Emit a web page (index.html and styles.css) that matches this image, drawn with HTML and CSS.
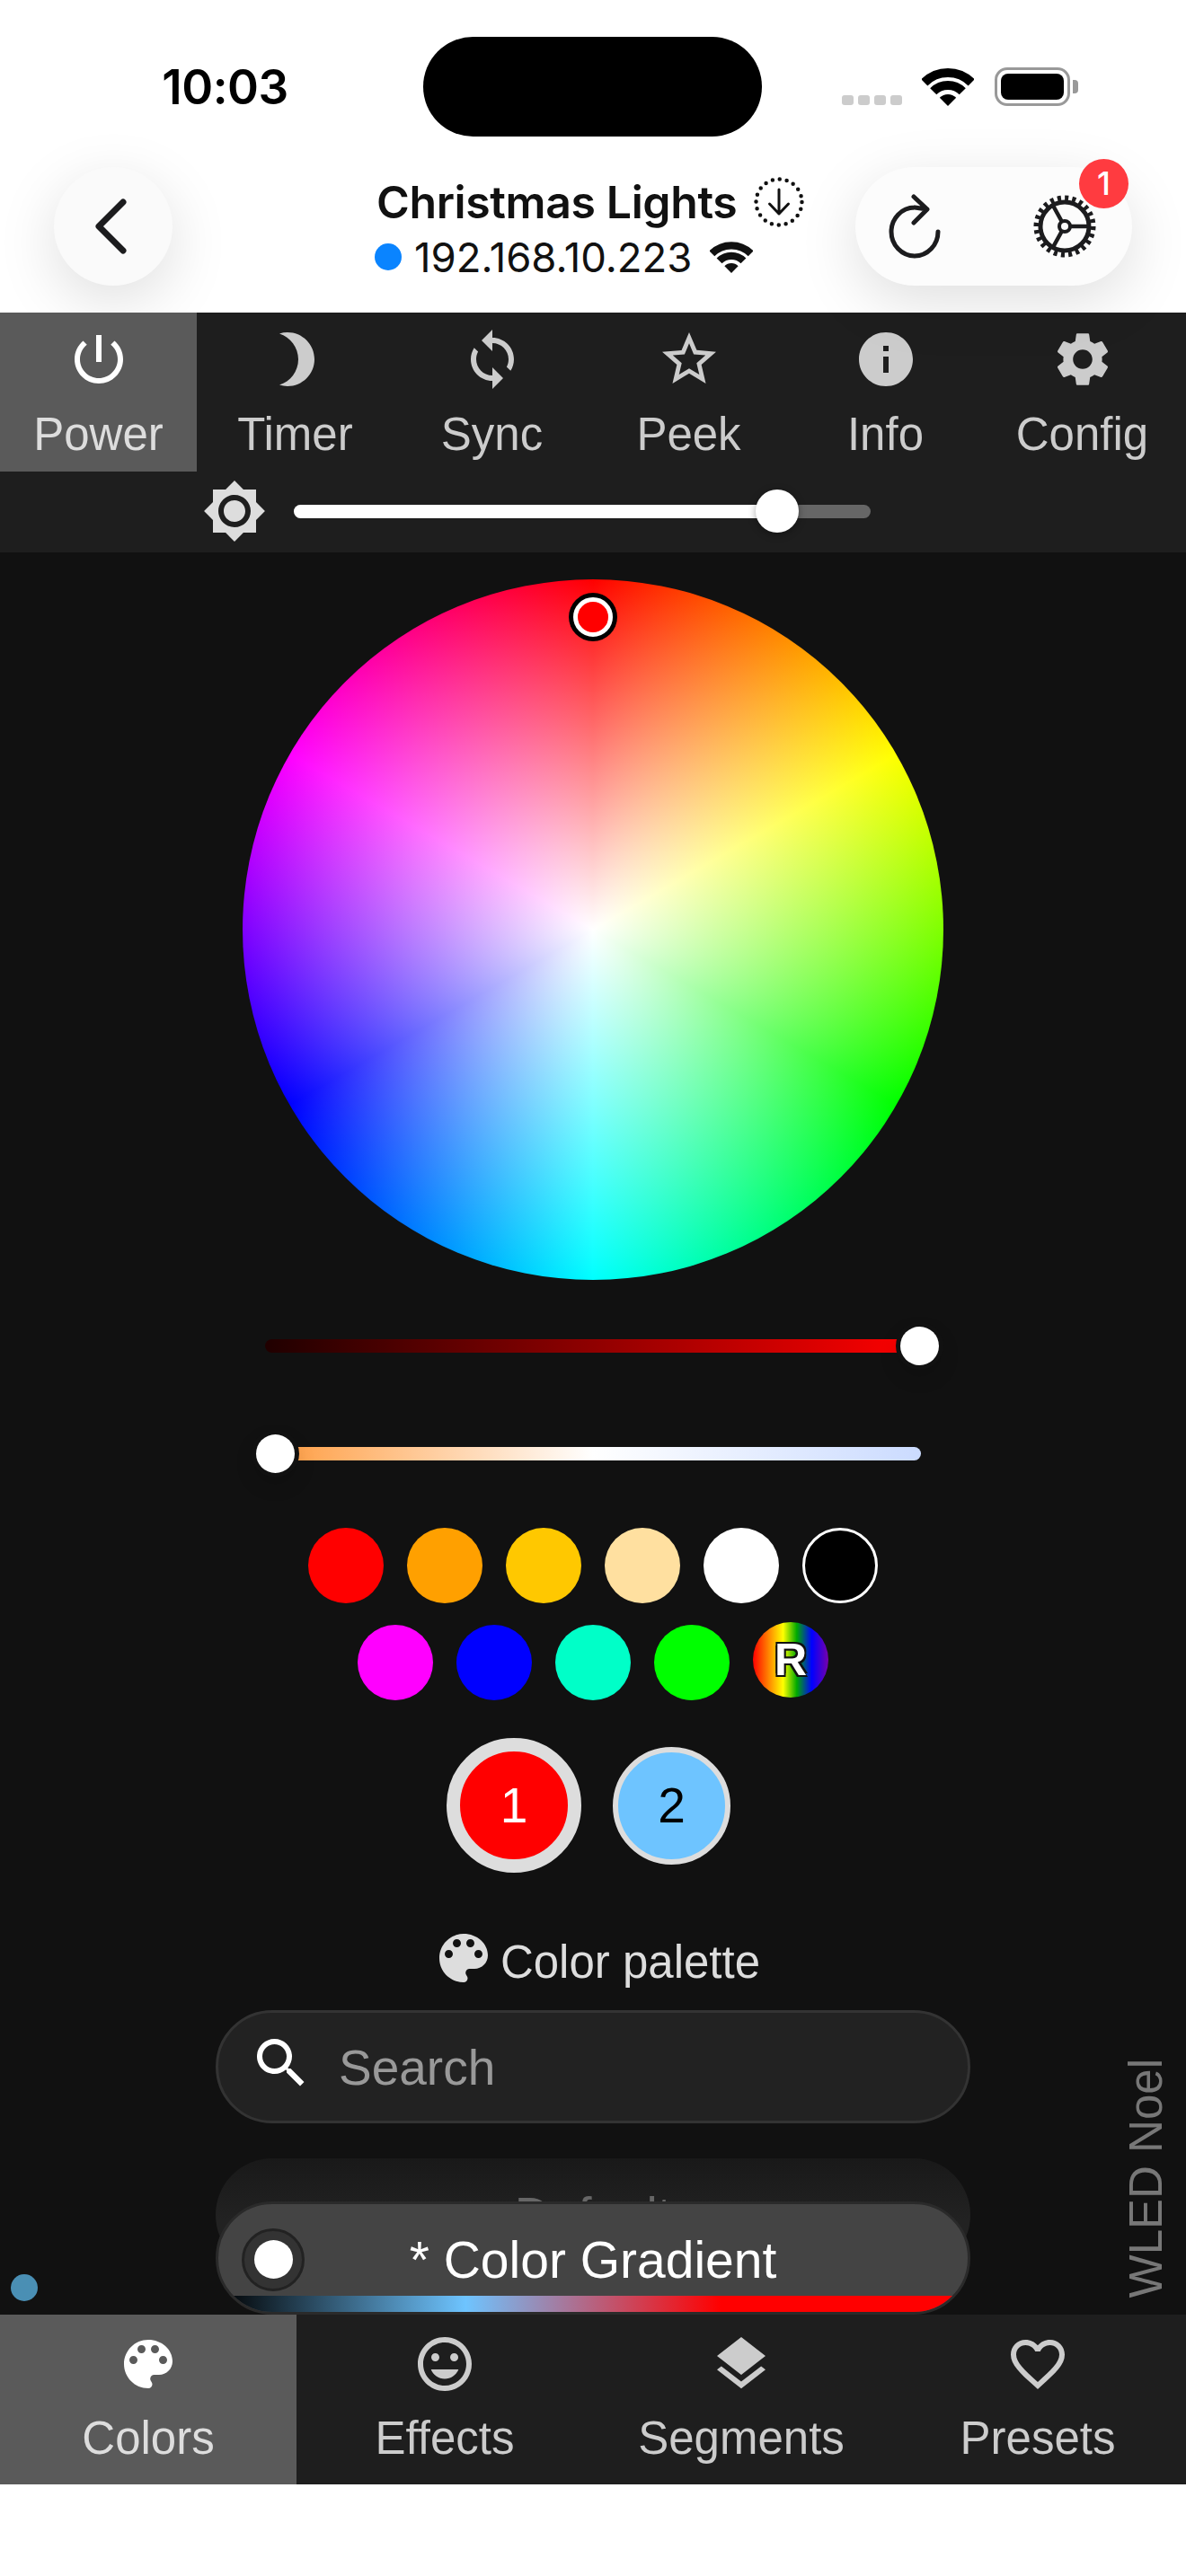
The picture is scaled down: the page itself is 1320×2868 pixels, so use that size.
FILE: index.html
```html
<!DOCTYPE html>
<html lang="en">
<head>
    <meta charset="UTF-8">
    <meta name="viewport" content="width=device-width, initial-scale=1.0">
    <title>Christmas Lights</title>
    <link rel="stylesheet" href="styles.css">
</head>
<body>
<svg class="icon-defs" xmlns="http://www.w3.org/2000/svg">
    <symbol id="i-wifi" viewBox="0 0 58 42">
        <path d="M2.84 15.84A37 37 0 0 1 55.16 15.84M12.74 25.74A23 23 0 0 1 45.26 25.74" fill="none" stroke="currentColor" stroke-width="10"/>
        <path d="M29 42L19.81 32.81A13 13 0 0 1 38.19 32.81Z" fill="currentColor"/>
    </symbol>
    <symbol id="i-palette" viewBox="0 0 24 24">
        <path d="M12 3c-4.97 0-9 4.03-9 9s4.03 9 9 9c.83 0 1.5-.67 1.5-1.5 0-.39-.15-.74-.39-1.01-.23-.26-.38-.61-.38-.99 0-.83.67-1.5 1.5-1.5H16c2.76 0 5-2.24 5-5 0-4.42-4.03-8-9-8zm-5.5 9c-.83 0-1.5-.67-1.5-1.5S5.67 9 6.5 9 8 9.67 8 10.5 7.33 12 6.5 12zm3-4C8.67 8 8 7.33 8 6.5S8.67 5 9.5 5s1.5.67 1.5 1.5S10.33 8 9.5 8zm5 0c-.83 0-1.5-.67-1.5-1.5S13.67 5 14.5 5s1.5.67 1.5 1.5S15.33 8 14.5 8zm3 4c-.83 0-1.5-.67-1.5-1.5S16.67 9 17.5 9s1.5.67 1.5 1.5-.67 1.5-1.5 1.5z" fill="currentColor"/>
    </symbol>
</svg>

<div class="app">
    <!-- iOS status bar -->
    <div class="status-bar">
        <div class="clock">10:03</div>
        <div class="island"></div>
        <div class="status-icons">
            <div class="signal"><span></span><span></span><span></span><span></span></div>
            <svg class="status-wifi"><use href="#i-wifi"/></svg>
            <div class="battery"><div class="battery-level"></div></div>
            <div class="battery-cap"></div>
        </div>
    </div>

    <!-- app header -->
    <header class="app-header">
        <button class="round-btn back-btn" aria-label="Back">
            <svg viewBox="0 0 40 64" class="back-icon"><path d="M34 5L7 32L34 59"/></svg>
        </button>
        <div class="device">
            <div class="device-name">
                <span>Christmas Lights</span>
                <svg class="update-icon" viewBox="0 0 56 56">
                    <circle class="update-dots" cx="28" cy="28" r="25.5"/>
                    <path class="update-arrow" d="M28 14V41M17.5 30L28 41L38.5 30"/>
                </svg>
            </div>
            <div class="device-addr">
                <span class="online-dot"></span>
                <span class="addr-text">192.168.10.223</span>
                <svg class="addr-wifi"><use href="#i-wifi"/></svg>
            </div>
        </div>
        <div class="action-pill">
            <svg class="reload-icon" viewBox="0 0 60 72"><path d="M55 42A26 27 0 1 1 29 15L43 17M28 3L43 17L28 32"/></svg>
            <svg class="cog-icon" viewBox="0 0 72 72">
                <circle class="cog-teeth" cx="36" cy="36" r="31"/>
                <circle class="cog-ring" cx="36" cy="36" r="27"/>
                <circle class="cog-hub" cx="36" cy="36" r="6"/>
                <path class="cog-spokes" d="M42 36H63M33 31L22 11M33 41L22 61"/>
            </svg>
            <span class="badge">1</span>
        </div>
    </header>

    <!-- top nav + brightness -->
    <section class="top-bar">
        <nav class="top-tabs">
            <a class="tab active">
                <svg class="tab-icon" viewBox="0 0 24 24"><path d="M13 3h-2v10h2V3zm4.83 2.17l-1.42 1.42C17.99 7.86 19 9.81 19 12c0 3.87-3.13 7-7 7s-7-3.13-7-7c0-2.19 1.01-4.14 2.58-5.42L6.17 5.17C4.23 6.82 3 9.26 3 12c0 4.97 4.03 9 9 9s9-4.03 9-9c0-2.74-1.23-5.18-3.17-6.83z"/></svg>
                <span>Power</span>
            </a>
            <a class="tab">
                <svg class="tab-icon" viewBox="0 0 24 24"><path d="M9 2c-1.05 0-2.05.16-3 .46 4.06 1.27 7 5.06 7 9.54 0 4.48-2.94 8.27-7 9.54.95.3 1.95.46 3 .46 5.52 0 10-4.48 10-10S14.52 2 9 2z"/></svg>
                <span>Timer</span>
            </a>
            <a class="tab">
                <svg class="tab-icon" viewBox="0 0 24 24"><path d="M12 4V1L8 5l4 4V6c3.31 0 6 2.69 6 6 0 1.01-.25 1.97-.7 2.8l1.46 1.46C19.54 15.03 20 13.57 20 12c0-4.42-3.58-8-8-8zm0 14c-3.31 0-6-2.69-6-6 0-1.01.25-1.97.7-2.8L5.24 7.74C4.46 8.97 4 10.43 4 12c0 4.42 3.58 8 8 8v3l4-4-4-4v3z"/></svg>
                <span>Sync</span>
            </a>
            <a class="tab">
                <svg class="tab-icon" viewBox="0 0 24 24"><path d="M22 9.24l-7.19-.62L12 2 9.19 8.63 2 9.24l5.46 4.73L5.82 21 12 17.27 18.18 21l-1.63-7.03L22 9.24zM12 15.4l-3.76 2.27 1-4.28-3.32-2.88 4.38-.38L12 6.1l1.71 4.04 4.38.38-3.32 2.88 1 4.28L12 15.4z"/></svg>
                <span>Peek</span>
            </a>
            <a class="tab">
                <svg class="tab-icon" viewBox="0 0 24 24"><path d="M12 2C6.48 2 2 6.48 2 12s4.48 10 10 10 10-4.48 10-10S17.52 2 12 2zm1 15h-2v-6h2v6zm0-8h-2V7h2v2z"/></svg>
                <span>Info</span>
            </a>
            <a class="tab">
                <svg class="tab-icon" viewBox="0 0 24 24"><path d="M19.14 12.94c.04-.3.06-.61.06-.94 0-.32-.02-.64-.07-.94l2.03-1.58c.18-.14.23-.41.12-.61l-1.92-3.32c-.12-.22-.37-.29-.59-.22l-2.39.96c-.5-.38-1.03-.7-1.62-.94l-.36-2.54c-.04-.24-.24-.41-.48-.41h-3.84c-.24 0-.43.17-.47.41l-.36 2.54c-.59.24-1.13.57-1.62.94l-2.39-.96c-.22-.08-.47 0-.59.22L2.74 8.87c-.12.21-.08.47.12.61l2.03 1.58c-.05.3-.09.63-.09.94s.02.64.07.94l-2.03 1.58c-.18.14-.23.41-.12.61l1.92 3.32c.12.22.37.29.59.22l2.39-.96c.5.38 1.03.7 1.62.94l.36 2.54c.05.24.24.41.48.41h3.84c.24 0 .44-.17.47-.41l.36-2.54c.59-.24 1.13-.56 1.62-.94l2.39.96c.22.08.47 0 .59-.22l1.92-3.32c.12-.22.07-.47-.12-.61l-2.01-1.58zM12 15.6c-1.98 0-3.6-1.62-3.6-3.6s1.62-3.6 3.6-3.6 3.6 1.62 3.6 3.6-1.62 3.6-3.6 3.6z"/></svg>
                <span>Config</span>
            </a>
        </nav>
        <div class="brightness">
            <svg class="bri-icon" viewBox="0 0 24 24"><path d="M20 8.69V4h-4.69L12 .69 8.69 4H4v4.69L.69 12 4 15.31V20h4.69L12 23.31 15.31 20H20v-4.69L23.31 12 20 8.69zM12 18c-3.31 0-6-2.69-6-6s2.69-6 6-6 6 2.69 6 6-2.69 6-6 6zm0-10c-2.21 0-4 1.79-4 4s1.79 4 4 4 4-1.79 4-4-1.79-4-4-4z"/></svg>
            <div class="bri-track">
                <div class="bri-fill"></div>
                <div class="bri-thumb"></div>
            </div>
        </div>
    </section>

    <!-- colors page -->
    <main class="colors-page">
        <div class="wheel">
            <div class="wheel-handle"></div>
        </div>

        <div class="slider slider-value"><div class="thumb thumb-end"></div></div>
        <div class="slider slider-kelvin"><div class="thumb thumb-start"></div></div>

        <div class="swatches">
            <span class="swatch sw-red"></span>
            <span class="swatch sw-orange"></span>
            <span class="swatch sw-amber"></span>
            <span class="swatch sw-cream"></span>
            <span class="swatch sw-white"></span>
            <span class="swatch sw-black"></span>
        </div>
        <div class="swatches swatches-second">
            <span class="swatch sw-magenta"></span>
            <span class="swatch sw-blue"></span>
            <span class="swatch sw-teal"></span>
            <span class="swatch sw-green"></span>
            <span class="swatch sw-random">R</span>
        </div>

        <div class="slots">
            <button class="slot slot-selected">1</button>
            <button class="slot slot-second">2</button>
        </div>

        <h3 class="palette-title">
            <svg class="palette-icon"><use href="#i-palette"/></svg>
            <span>Color palette</span>
        </h3>

        <div class="search-box">
            <svg class="search-icon" viewBox="0 0 24 24"><path d="M15.5 14h-.79l-.28-.27C15.41 12.59 16 11.11 16 9.5 16 5.91 13.09 3 9.5 3S3 5.91 3 9.5 5.91 16 9.5 16c1.61 0 3.09-.59 4.23-1.57l.27.28v.79l5 4.99L20.49 19l-4.99-5zm-6 0C7.01 14 5 11.99 5 9.5S7.01 5 9.5 5 14 7.01 14 9.5 11.99 14 9.5 14z"/></svg>
            <span class="search-text">Search</span>
        </div>

        <div class="palette-list">
            <div class="palette-row">Default</div>
            <div class="palette-selected">
                <span class="radio"><span class="radio-dot"></span></span>
                <span class="selected-name">* Color Gradient</span>
                <div class="palette-strip"></div>
            </div>
        </div>

        <div class="conn-dot"></div>
        <div class="device-label">WLED Noel</div>
    </main>

    <!-- bottom nav -->
    <nav class="bottom-tabs">
        <a class="tab active">
            <svg class="tab-icon"><use href="#i-palette"/></svg>
            <span>Colors</span>
        </a>
        <a class="tab">
            <svg class="tab-icon" viewBox="0 0 24 24"><path d="M11.99 2C6.47 2 2 6.48 2 12s4.47 10 9.99 10C17.52 22 22 17.52 22 12S17.52 2 11.99 2zM12 20c-4.42 0-8-3.58-8-8s3.58-8 8-8 8 3.58 8 8-3.58 8-8 8zm3.5-9c.83 0 1.5-.67 1.5-1.5S16.33 8 15.5 8 14 8.67 14 9.5s.67 1.5 1.5 1.5zm-7 0c.83 0 1.5-.67 1.5-1.5S9.33 8 8.5 8 7 8.67 7 9.5 7.67 11 8.5 11zm3.5 6.5c2.33 0 4.31-1.46 5.11-3.5H6.89c.8 2.04 2.78 3.5 5.11 3.5z"/></svg>
            <span>Effects</span>
        </a>
        <a class="tab">
            <svg class="tab-icon" viewBox="0 0 24 24"><path d="M11.99 18.54l-7.37-5.73L3 14.07l9 7 9-7-1.63-1.27-7.38 5.74zM12 16l7.36-5.73L21 9l-9-7-9 7 1.63 1.27L12 16z"/></svg>
            <span>Segments</span>
        </a>
        <a class="tab">
            <svg class="tab-icon" viewBox="0 0 24 24"><path d="M16.5 3c-1.74 0-3.41.81-4.5 2.09C10.91 3.81 9.24 3 7.5 3 4.42 3 2 5.42 2 8.5c0 3.78 3.4 6.86 8.55 11.54L12 21.35l1.45-1.32C18.6 15.36 22 12.28 22 8.5 22 5.42 19.58 3 16.5 3zm-4.4 15.55l-.1.1-.1-.1C7.14 14.24 4 11.39 4 8.5 4 6.5 5.5 5 7.5 5c1.54 0 3.04.99 3.57 2.36h1.87C13.46 5.99 14.96 5 16.5 5c2 0 3.5 1.5 3.5 3.5 0 2.89-3.14 5.74-7.9 10.05z"/></svg>
            <span>Presets</span>
        </a>
    </nav>
</div>
</body>
</html>
```

FILE: styles.css
```css
* {
    box-sizing: border-box;
}

body {
    margin: 0;
    background: #fff;
    font-family: "Liberation Sans", Arial, sans-serif;
}

.icon-defs {
    display: none;
}

.app {
    width: 1320px;
    height: 2868px;
    display: flex;
    flex-direction: column;
    overflow: hidden;
}

/* Status bar */
.status-bar {
    height: 186px;
    display: flex;
    align-items: flex-start;
    font-family: Inter, "Liberation Sans", sans-serif;
}

.clock {
    width: 471px;
    padding-left: 30px;
    height: 194px;
    line-height: 194px;
    text-align: center;
    font-size: 53px;
    font-weight: 600;
    letter-spacing: -0.5px;
    color: #000;
}

.island {
    width: 377px;
    height: 111px;
    margin-top: 41px;
    background: #000;
    border-radius: 56px;
}

.status-icons {
    height: 118px;
    padding-left: 89px;
    display: flex;
    align-items: flex-end;
}

.signal {
    display: flex;
    gap: 5px;
    margin-bottom: 1px;
}

.signal span {
    width: 13px;
    height: 11px;
    border-radius: 3px;
    background: #ccc;
}

.status-wifi {
    width: 58px;
    height: 42px;
    margin-left: 22px;
    color: #000;
}

.battery {
    width: 84px;
    height: 43px;
    margin-left: 23px;
    padding: 4px;
    border: 3px solid #999;
    border-radius: 14px;
}

.battery-level {
    height: 100%;
    background: #000;
    border-radius: 8px;
}

.battery-cap {
    width: 6px;
    height: 15px;
    margin: 0 0 14px 3px;
    background: #999;
    border-radius: 0 4px 4px 0;
}

/* App header */
.app-header {
    height: 162px;
    padding-left: 60px;
    display: flex;
    align-items: flex-start;
    font-family: Inter, "Liberation Sans", sans-serif;
    color: #111;
}

.round-btn {
    width: 132px;
    height: 132px;
    padding: 0;
    border: 0;
    border-radius: 50%;
    background: #fafafa;
    box-shadow: 0 18px 66px rgba(0, 0, 0, 0.13);
    display: flex;
    align-items: center;
    justify-content: center;
}

.back-icon {
    width: 40px;
    height: 64px;
    margin-left: -6px;
    fill: none;
    stroke: #1c1c1e;
    stroke-width: 7;
    stroke-linecap: round;
    stroke-linejoin: round;
}

.device {
    width: 760px;
    padding: 9px 0 0 225px;
}

.device-name {
    height: 60px;
    display: flex;
    align-items: center;
    gap: 19px;
    margin-left: 2px;
    font-size: 50px;
    font-weight: 600;
    letter-spacing: -0.4px;
}

.update-icon {
    width: 56px;
    height: 56px;
    flex: none;
    fill: none;
    stroke: #111;
}

.update-dots {
    stroke-width: 4.5;
    stroke-linecap: round;
    stroke-dasharray: 0 8.01;
}

.update-arrow {
    stroke-width: 3;
    stroke-linecap: round;
    stroke-linejoin: round;
}

.device-addr {
    height: 60px;
    margin-top: 1px;
    display: flex;
    align-items: center;
    font-size: 45.5px;
}

.online-dot {
    width: 30px;
    height: 30px;
    border-radius: 50%;
    background: #0a84ff;
    margin-right: 14px;
}

.addr-wifi {
    width: 48px;
    height: 35px;
    margin-left: 20px;
    color: #111;
}

.action-pill {
    position: relative;
    width: 308px;
    height: 132px;
    padding-left: 37px;
    display: flex;
    align-items: center;
    gap: 100px;
    background: #fcfcfc;
    border-radius: 66px;
    box-shadow: 0 18px 66px rgba(0, 0, 0, 0.13);
}

.reload-icon {
    width: 60px;
    height: 72px;
    flex: none;
    fill: none;
    stroke: #1c1c1e;
    stroke-width: 5;
    stroke-linecap: round;
    stroke-linejoin: round;
}

.cog-icon {
    width: 72px;
    height: 72px;
    flex: none;
    fill: none;
    stroke: #1c1c1e;
}

.cog-teeth {
    stroke-width: 7;
    stroke-dasharray: 4 4.11;
}

.cog-ring {
    stroke-width: 5;
}

.cog-hub {
    stroke-width: 4;
}

.cog-spokes {
    stroke-width: 4.5;
}

/* sits over the corner of the pill */
.badge {
    position: absolute;
    left: 249px;
    top: -9px;
    width: 55px;
    height: 55px;
    border-radius: 50%;
    background: #ff3b40;
    color: #fff;
    font-size: 36px;
    font-weight: 500;
    line-height: 55px;
    text-align: center;
}

/* Tabs, shared by top and bottom nav */
.top-bar {
    height: 267px;
    background: #1e1e1e;
}

.top-tabs {
    display: grid;
    grid-template-columns: repeat(6, 219px);
    height: 177px;
}

.bottom-tabs {
    display: grid;
    grid-template-columns: repeat(4, 1fr);
    height: 189px;
    background: #1e1e1e;
}

.tab {
    display: flex;
    flex-direction: column;
    align-items: center;
    padding-top: 16px;
    color: #ccc;
    font-size: 51px;
    line-height: 60px;
}

.bottom-tabs .tab {
    padding-top: 19px;
}

.tab.active {
    background: #5a5a5a;
    color: #ddd;
}

.tab-icon {
    width: 72px;
    height: 72px;
    margin-bottom: 18px;
    fill: #ccc;
    color: #ccc;
    flex: none;
}

.bottom-tabs .tab-icon {
    margin-bottom: 17px;
}

.tab.active .tab-icon {
    fill: #fff;
    color: #fff;
}

/* Brightness */
.brightness {
    height: 90px;
    padding: 0 0 2px 225px;
    display: flex;
    align-items: center;
    gap: 30px;
}

.bri-icon {
    width: 72px;
    height: 72px;
    fill: #ddd;
}

.bri-track {
    position: relative;
    width: 642px;
    height: 15px;
    background: #666;
    border-radius: 8px;
}

.bri-fill {
    width: 538px;
    height: 15px;
    background: #fff;
    border-radius: 8px;
}

.bri-thumb {
    position: absolute;
    left: 514px;
    top: -17px;
    width: 48px;
    height: 48px;
    border-radius: 50%;
    background: #fff;
    box-shadow: 0 2px 8px rgba(0, 0, 0, 0.35);
}

/* Colors page */
.colors-page {
    position: relative;
    height: 1962px;
    flex: none;
    background: #111;
    display: flex;
    flex-direction: column;
    align-items: center;
    overflow: hidden;
}

.wheel {
    position: relative;
    width: 780px;
    height: 780px;
    margin-top: 30px;
    flex: none;
    border-radius: 50%;
    background:
        radial-gradient(circle closest-side, #fff, rgba(255, 255, 255, 0)),
        conic-gradient(#f00, #ff0, #0f0, #0ff, #00f, #f0f, #f00);
}

.wheel-handle {
    position: absolute;
    left: 368px;
    top: 20px;
    width: 44px;
    height: 44px;
    border-radius: 50%;
    background: #f00;
    border: 5.5px solid #fff;
    box-shadow: 0 0 0 5px #000;
}

.slider {
    position: relative;
    width: 730px;
    height: 15px;
    flex: none;
    border-radius: 8px;
}

.slider-value {
    margin-top: 66px;
    background: linear-gradient(90deg, #200000, #f00);
}

.slider-kelvin {
    margin-top: 105px;
    background: linear-gradient(90deg, #ff9a3c, #fff 50%, #cbdbff);
}

.thumb {
    position: absolute;
    top: -14px;
    width: 43px;
    height: 43px;
    border-radius: 50%;
    background: #fff;
    box-shadow: 0 0 0 5px #111, 0 10px 24px rgba(0, 0, 0, 0.2);
}

.thumb-end {
    left: 707px;
}

.thumb-start {
    left: -10px;
}

.swatches {
    display: flex;
    gap: 26px;
    margin-top: 75px;
    flex: none;
}

.swatches-second {
    margin-top: 24px;
}

.swatch {
    width: 84px;
    height: 84px;
    border-radius: 50%;
}

.sw-red { background: #f00; }
.sw-orange { background: #ffa000; }
.sw-amber { background: #ffc800; }
.sw-cream { background: #ffe0a0; }
.sw-white { background: #fff; }
.sw-black { background: #000; border: 3px solid #fff; }
.sw-magenta { background: #f0f; }
.sw-blue { background: #00f; }
.sw-teal { background: #00ffc8; }
.sw-green { background: #0f0; }

.sw-random {
    margin-top: -3px;
    background: linear-gradient(90deg, #f00, #ff0 40%, #0a0 58%, #00f 78%, #70a);
    color: #fff;
    font-size: 50px;
    font-weight: 700;
    line-height: 84px;
    text-align: center;
    text-shadow: -2px -2px 0 #111, 2px -2px 0 #111, -2px 2px 0 #111, 2px 2px 0 #111;
}

.slots {
    display: flex;
    align-items: center;
    gap: 35px;
    margin-top: 42px;
    flex: none;
    padding-right: 10px;
}

.slot {
    padding: 0;
    border-radius: 50%;
    font-family: inherit;
    font-size: 55px;
}

.slot-selected {
    width: 150px;
    height: 150px;
    border: 15px solid #ddd;
    background: #f00;
    color: #fff;
}

.slot-second {
    width: 131px;
    height: 131px;
    border: 6px solid #ddd;
    background: #6ec4ff;
    color: #000;
}

.palette-title {
    display: flex;
    align-items: center;
    height: 72px;
    margin: 59px 0 0;
    flex: none;
    padding-left: 6px;
    gap: 5px;
    color: #ddd;
    font-size: 51px;
    font-weight: 400;
}

.palette-title span {
    margin-top: 8px;
}

.palette-icon {
    width: 72px;
    height: 72px;
    color: #ddd;
}

.search-box {
    width: 840px;
    height: 126px;
    margin-top: 22px;
    padding-left: 34px;
    flex: none;
    display: flex;
    align-items: center;
    background: #222;
    border: 3px solid #333;
    border-radius: 63px;
}

.search-icon {
    width: 72px;
    height: 72px;
    margin-top: -8px;
    fill: #fff;
}

.search-text {
    margin-left: 28px;
    margin-top: 2px;
    color: #999;
    font-size: 55px;
}

.palette-list {
    position: relative;
    width: 840px;
    height: 174px;
    margin-top: 39px;
    flex: none;
}

.palette-row {
    height: 126px;
    border-radius: 63px;
    background: linear-gradient(#191919, #222 55%);
    color: #666;
    font-size: 55px;
    line-height: 126px;
    text-align: center;
}

.palette-selected {
    position: absolute;
    left: 0;
    top: 48px;
    width: 840px;
    height: 126px;
    padding-top: 3px;
    display: grid;
    grid-template-columns: 1fr auto 1fr;
    align-items: center;
    background: #444;
    border: 3px solid #2a2a2a;
    border-radius: 63px;
    overflow: hidden;
    color: #fff;
    font-size: 57px;
}

.radio {
    justify-self: start;
    width: 70px;
    height: 70px;
    margin-left: 26px;
    display: flex;
    align-items: center;
    justify-content: center;
    background: #333;
    border: 3px solid #222;
    border-radius: 50%;
}

.radio-dot {
    width: 43px;
    height: 43px;
    border-radius: 50%;
    background: #fff;
}

.palette-strip {
    position: absolute;
    left: 0;
    right: 0;
    bottom: 0;
    height: 18px;
    background: linear-gradient(90deg, #000, #6ec4ff 33%, #f00 67%, #f00);
}

.conn-dot {
    position: absolute;
    left: 12px;
    top: 1917px;
    width: 30px;
    height: 30px;
    border-radius: 50%;
    background: #4a8fb4;
}

.device-label {
    position: absolute;
    right: 22px;
    bottom: 19px;
    writing-mode: vertical-rl;
    transform: rotate(180deg);
    color: #777;
    font-size: 51px;
    line-height: 44px;
}
```
